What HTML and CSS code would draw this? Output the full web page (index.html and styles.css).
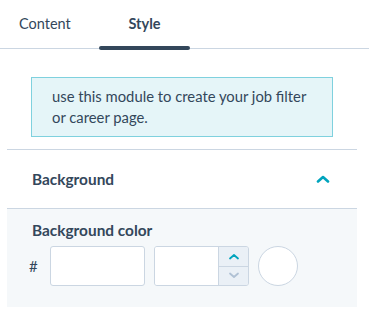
FILE: index.html
```html
<!DOCTYPE html>
<html lang="en">
<head>
    <meta charset="UTF-8">
    <meta name="viewport" content="width=device-width, initial-scale=1.0">
    <title>Module Style</title>
    <link rel="stylesheet" href="styles.css">
</head>
<body>
    <div class="tabs">
        <div class="tab">Content</div>
        <div class="tab tab-active">Style</div>
    </div>
    <div class="panel">
        <div class="notice">
            use this module to create your job filter or career page.
        </div>
        <div class="section-header">
            <span>Background</span>
            <svg class="chevron" width="14" height="8" viewBox="0 0 14 8">
                <path d="M2 6.5 L7 2 L12 6.5" fill="none" stroke="#00a4bd" stroke-width="2.6" stroke-linecap="round" stroke-linejoin="round"/>
            </svg>
        </div>
        <div class="section-body">
            <div class="field-label">Background color</div>
            <div class="color-row">
                <span class="hash">#</span>
                <input class="text-input hex-input" type="text">
                <div class="number-input">
                    <input class="text-input opacity-input" type="text">
                    <div class="stepper">
                        <div class="step">
                            <svg width="12" height="7" viewBox="0 0 12 7"><path d="M2 5.5 L6 2 L10 5.5" fill="none" stroke="#00a4bd" stroke-width="1.8" stroke-linecap="round" stroke-linejoin="round"/></svg>
                        </div>
                        <div class="step step-down">
                            <svg width="12" height="7" viewBox="0 0 12 7"><path d="M2 1.5 L6 5 L10 1.5" fill="none" stroke="#b0c1d4" stroke-width="1.8" stroke-linecap="round" stroke-linejoin="round"/></svg>
                        </div>
                    </div>
                </div>
                <div class="swatch"></div>
            </div>
        </div>
    </div>
</body>
</html>
```

FILE: styles.css
```css
body {
    margin: 0;
    background: #fff;
    font-family: Lato, "Open Sans", sans-serif;
    color: #33475b;
}

.tabs {
    display: flex;
    height: 48px;
    border-bottom: 1px solid #cbd6e2;
}

.tab {
    width: 99px;
    padding-left: 19px;
    box-sizing: border-box;
    line-height: 48px;
    font-size: 14.5px;
    color: #33475b;
}

.tab-active {
    position: relative;
    width: 91px;
    padding-left: 0;
    text-align: center;
    font-weight: bold;
}

.tab-active::after {
    content: "";
    position: absolute;
    left: 0;
    right: 0;
    bottom: -2px;
    height: 4px;
    border-radius: 2px;
    background: #33475b;
}

.panel {
    width: 350px;
    margin-left: 7px;
}

.notice {
    margin: 28px 24px 0;
    padding: 8px 20px 8px;
    background: #e5f5f8;
    border: 1px solid #7fd1de;
    font-size: 14.8px;
    line-height: 21px;
}

.section-header {
    display: flex;
    justify-content: space-between;
    align-items: center;
    height: 58px;
    margin-top: 12px;
    padding: 0 27px 0 25px;
    border-top: 1px solid #cbd6e2;
    border-bottom: 1px solid #cbd6e2;
    font-size: 15.4px;
    font-weight: bold;
    line-height: 18px;
}

.section-body {
    padding: 12px 25px 21px;
    background: #f5f8fa;
}

.field-label {
    font-size: 15.4px;
    font-weight: bold;
    line-height: 18px;
}

.color-row {
    display: flex;
    align-items: center;
    gap: 9px;
    margin-top: 7px;
}

.hash {
    width: 12px;
    margin-left: -3px;
    font-size: 15px;
}

.text-input {
    box-sizing: border-box;
    height: 40px;
    border: 1px solid #cbd6e2;
    border-radius: 3px;
    background: #fff;
    padding: 0 8px;
    font: inherit;
    outline: none;
}

.hex-input {
    width: 95px;
}

.number-input {
    display: flex;
    width: 95px;
    height: 40px;
    box-sizing: border-box;
    border: 1px solid #cbd6e2;
    border-radius: 3px;
    overflow: hidden;
}

.opacity-input {
    width: 63px;
    height: 38px;
    border: none;
    border-radius: 0;
}

.stepper {
    display: flex;
    flex-direction: column;
    flex: 1;
    background: #eaf0f6;
    border-left: 1px solid #cbd6e2;
}

.step {
    flex: 1;
    display: flex;
    align-items: center;
    justify-content: center;
}

.step-down {
    border-top: 1px solid #cbd6e2;
}

.swatch {
    width: 40px;
    height: 40px;
    box-sizing: border-box;
    border: 1px solid #cbd6e2;
    border-radius: 50%;
    background: #fff;
}
```
